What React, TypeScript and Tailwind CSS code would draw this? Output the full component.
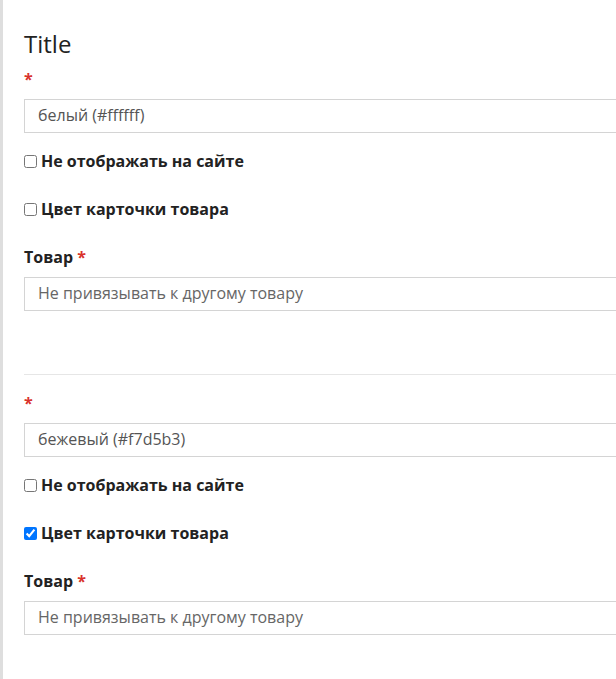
import React from "react";

type Item = {
  value: string;
  hidden: boolean;
  cardColor: boolean;
};

const items: Item[] = [
  { value: "белый (#ffffff)", hidden: false, cardColor: false },
  { value: "бежевый (#f7d5b3)", hidden: false, cardColor: true },
];

function Required() {
  return <span className="text-[#d9332b] font-bold">*</span>;
}

function CheckRow({ label, checked, className }: { label: string; checked: boolean; className?: string }) {
  return (
    <label className={`flex items-center h-[22px] text-[16px] font-bold text-[#222] ${className ?? ""}`}>
      <input type="checkbox" defaultChecked={checked} className="w-[13px] h-[13px] mr-1" />
      <span>{label}</span>
    </label>
  );
}

function ColorItem({ item }: { item: Item }) {
  return (
    <div>
      {/* required mark of the value field */}
      <div className="h-[22px] leading-[22px] text-[16px]">
        <Required />
      </div>
      <div className="mt-[9px] h-[34px] border border-[#d4d4d4] px-[13px] pb-[2px] flex items-center text-[16px] text-[#555]">
        {item.value}
      </div>
      <CheckRow label="Не отображать на сайте" checked={item.hidden} className="mt-[17px]" />
      <CheckRow label="Цвет карточки товара" checked={item.cardColor} className="mt-[26px]" />
      <div className="mt-[26px] h-[22px] leading-[22px] text-[16px] font-bold text-[#222]">
        Товар <Required />
      </div>
      <div className="mt-[9px] h-[34px] border border-[#d4d4d4] px-[13px] pb-[2px] flex items-center text-[16px] text-[#666]">
        Не привязывать к другому товару
      </div>
    </div>
  );
}

export default function App() {
  return (
    <div
      className="w-[616px] h-[679px] overflow-hidden bg-white border-l-[3px] border-[#dedede]"
      style={{ fontFamily: '"Open Sans", "Noto Sans", sans-serif' }}
    >
      <div className="w-[680px] pl-[21px] pt-[29px]">
        <h2 className="text-[24px] leading-[29px] text-[#222] font-normal">Title</h2>
        <div className="mt-[10px]">
          <ColorItem item={items[0]} />
        </div>
        <div className="mt-[63px] border-t border-[#e6e6e6] pt-[17px]">
          <ColorItem item={items[1]} />
        </div>
      </div>
    </div>
  );
}
